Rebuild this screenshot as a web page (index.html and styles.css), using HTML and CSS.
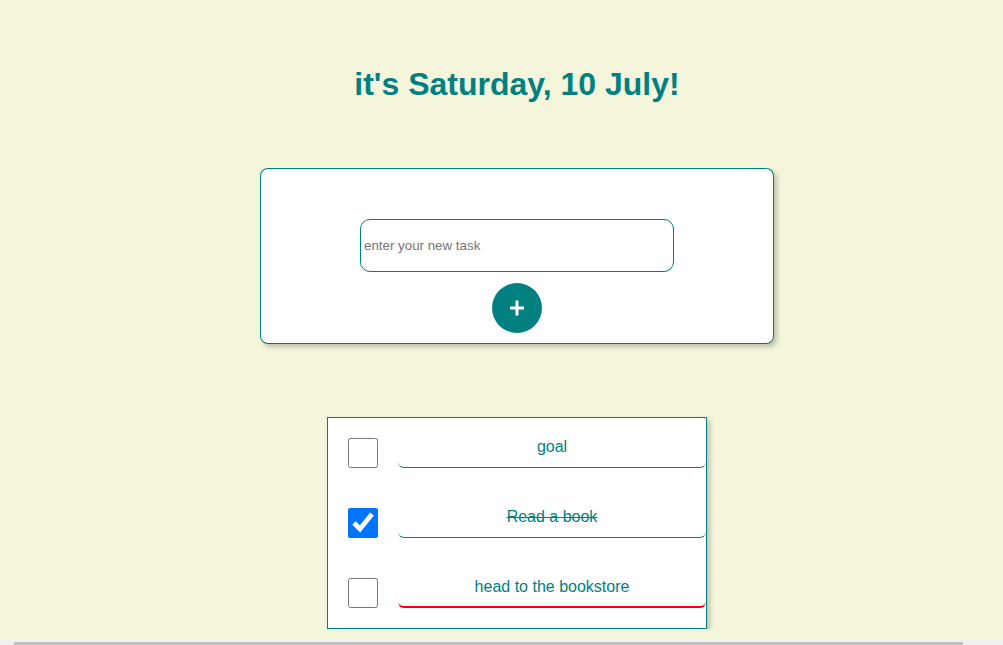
FILE: index.html
```html
<!DOCTYPE html>
<html lang="en">
<head>
<meta charset="utf-8">
<title>Todo</title>
<link rel="stylesheet" href="styles.css">
</head>
<body>
<div class="page">
  <h1 class="title">it's Saturday, 10 July!</h1>

  <div class="card">
    <input class="new-task" type="text" placeholder="enter your new task">
    <button class="add-btn" type="button" aria-label="add">
      <svg width="16" height="16" viewBox="0 0 16 16" aria-hidden="true">
        <rect x="1" y="6.5" width="14" height="3" fill="#fff"/>
        <rect x="6.5" y="0.5" width="3" height="15" fill="#fff"/>
      </svg>
    </button>
  </div>

  <ul class="list">
    <li class="item">
      <input class="check" type="checkbox">
      <span class="field">goal</span>
    </li>
    <li class="item">
      <input class="check" type="checkbox" checked>
      <span class="field done">Read a book</span>
    </li>
    <li class="item">
      <input class="check" type="checkbox">
      <span class="field urgent">head to the bookstore</span>
    </li>
  </ul>
</div>
<div class="hscroll"><div class="hscroll-thumb"></div></div>
</body>
</html>
```

FILE: styles.css
```css
html {
  overflow: hidden;
}

body {
  margin: 0;
  background: #f5f5dc;
  font-family: "Liberation Sans", Arial, sans-serif;
}

.page {
  width: 1034px;
  padding-top: 66px;
  display: flex;
  flex-direction: column;
  align-items: center;
}

.title {
  margin: 0;
  font-size: 32px;
  line-height: 37px;
  font-weight: bold;
  color: #008080;
}

.card {
  box-sizing: border-box;
  width: 514px;
  height: 176px;
  margin-top: 65px;
  padding: 50px 0 10px;
  border: 1px solid #008080;
  border-bottom-color: #0e7a32;
  border-radius: 8px;
  background: #fff;
  box-shadow: 3px 3px 5px rgba(0, 0, 0, 0.22);
  display: flex;
  flex-direction: column;
  align-items: center;
  gap: 11px;
}

.new-task {
  box-sizing: border-box;
  width: 314px;
  height: 53px;
  margin: 0;
  padding: 0 3px;
  border: 1px solid #008080;
  border-radius: 10px;
  background: #fff;
  font-family: "Liberation Sans", Arial, sans-serif;
  font-size: 13.33px;
  color: #333;
  outline: none;
}

.new-task::placeholder {
  color: #757575;
}

.add-btn {
  width: 50px;
  height: 50px;
  margin: 0;
  padding: 0;
  border: none;
  border-radius: 50%;
  background: #008080;
  display: flex;
  align-items: center;
  justify-content: center;
}

.add-btn svg {
  display: block;
}

.list {
  box-sizing: border-box;
  width: 380px;
  margin: 73px 0 0;
  padding: 20px 0 20px 20px;
  list-style: none;
  border: 1px solid #008080;
  background: #fff;
  box-shadow: 3px 3px 5px rgba(0, 0, 0, 0.22);
  display: flex;
  flex-direction: column;
  gap: 40px;
}

.item {
  display: flex;
  align-items: flex-start;
  gap: 20px;
}

.check {
  width: 30px;
  height: 30px;
  margin: 0;
  flex: none;
}

.field {
  box-sizing: border-box;
  flex: 1;
  height: 30px;
  padding: 0 0 11px;
  font-size: 16px;
  line-height: 17px;
  color: #008080;
  text-align: center;
  border-bottom: 1px solid #008080;
  border-radius: 0 0 6px 6px;
}

.field.done {
  text-decoration: line-through;
  text-decoration-color: #008080;
}

.field.urgent {
  padding-bottom: 10px;
  border-bottom: 2px solid #ff0000;
}

.hscroll {
  position: fixed;
  left: 0;
  right: 0;
  bottom: 0;
  height: 5px;
  background: #f1f1f1;
}

.hscroll-thumb {
  margin: 2px 0 0 14px;
  width: 949px;
  height: 3px;
  background: #c1c1c1;
}
```
